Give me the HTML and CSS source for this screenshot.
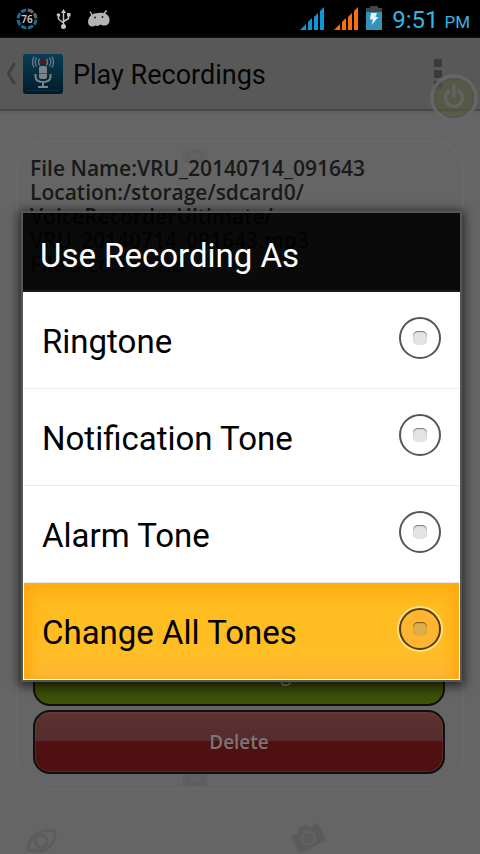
FILE: index.html
```html
<!DOCTYPE html>
<html lang="en">
<head>
<meta charset="utf-8">
<meta name="viewport" content="width=device-width, initial-scale=1">
<title>Play Recordings</title>
<link rel="stylesheet" href="styles.css">
</head>
<body>
<div class="screen">
  <div class="status">
    <svg class="status-left" width="112" height="38" viewBox="0 0 112 38" aria-hidden="true">
      <circle cx="27" cy="19" r="9" fill="none" stroke="#1d6c8d" stroke-width="3" stroke-dasharray="5.6 1.47" transform="rotate(3 27 19)"/>
      <path d="M28 10A9 9 0 0 1 33 12.500M34.500 14A9 9 0 0 1 36 18" fill="none" stroke="#666" stroke-width="3"/>
      <text x="27" y="23" class="percent">76</text>
      <g fill="none" stroke="#c4c4c4" stroke-width="1.500"><path d="M63.500 12V26M58.500 16V19L63.500 23M68.500 15V18.500L63.500 21.500"/></g>
      <g fill="#c4c4c4"><path d="M61 13L63.500 9L66 13Z"/><circle cx="63.500" cy="26.500" r="2.500"/><circle cx="58.500" cy="15" r="1.800"/><path d="M67 13h3.500v3.500H67z"/></g>
      <path d="M92 15L90 11.500M104 14L106.500 10.500" stroke="#b4b4b4" stroke-width="1.500"/>
      <path d="M88 22C88.500 16 92.500 13 98.500 13C104.500 12 109 15 109.500 19C110 23 108 25.500 104.500 25.500C102.500 25.500 101 25 100 24.500C98.500 26.500 96.500 26 95.500 25.500C93 27.500 88 27 88 22Z" fill="#b4b4b4"/>
      <circle cx="95" cy="17.500" r="1" fill="#222"/><circle cx="102.500" cy="17" r="1" fill="#222"/>
    </svg>
    <div class="status-right">
      <svg width="82" height="38" viewBox="0 0 82 38" aria-hidden="true">
        <g fill="#0898dc"><path d="M0 30L6 24V30ZM8 22L12 18V30H8ZM14 17L18 13V30H14ZM20 11L24 7V30H20Z"/></g>
        <g fill="#ff6d0c" transform="translate(34)"><path d="M0 30L6 24V30ZM8 22L12 18V30H8ZM14 17L18 13V30H14ZM20 11L24 7V30H20Z"/></g>
        <path d="M66 12V8H70V6H78V8H82V12Z" fill="#454545"/>
        <path d="M66 12H82V30H66Z" fill="#3393b9"/>
        <path d="M71 13H77L75.500 17H78.500L71.500 25L73 19.500H70Z" fill="#e4f3f8"/>
      </svg>
      <span class="clock">9:51 <small>PM</small></span>
    </div>
  </div>

  <header class="appbar">
    <a class="up" href="#" aria-label="Back">
      <svg width="11" height="24" viewBox="0 0 11 24"><path d="M9.500 1L3.500 11.500L9.500 22" fill="none" stroke="#414141" stroke-width="3"/></svg>
      <svg width="40" height="40" viewBox="0 0 40 40">
        <defs><linearGradient id="tile" x2="0" y2="1"><stop stop-color="#063e55"/><stop offset="1" stop-color="#031a29"/></linearGradient></defs>
        <rect width="40" height="40" rx="3" fill="url(#tile)"/>
        <path d="M4 36.500H36" stroke="#073448"/>
        <circle cx="20" cy="8" r="2.500" fill="#770a0a"/>
        <g fill="none" stroke="#687984" stroke-width="1.300"><path d="M16.500 4.500Q14.500 8 16.500 11.500M13.500 3.500Q11 8 13.500 12.500M11 2.500Q8 8 11 13.500M23.500 4.500Q25.500 8 23.500 11.500M26.500 3.500Q29 8 26.500 12.500M29 2.500Q32 8 29 13.500"/></g>
        <rect x="16" y="12" width="8" height="13" rx="2" fill="#7d858a"/><path d="M16 19.500H24" stroke="#46545c"/>
        <path d="M12.500 20V23Q13 28 20 28Q27 28 27.500 23V20M20 28V33M15 33H25" fill="none" stroke="#7d858a" stroke-width="2"/>
      </svg>
    </a>
    <h1>Play Recordings</h1>
    <button class="more" aria-label="More options"><i></i><i></i><i></i></button>
    <button class="power" aria-label="Power">
      <svg width="48" height="48" viewBox="0 0 48 48"><circle cx="24" cy="24" r="20.500" fill="#555940" fill-opacity=".75"/><circle cx="24" cy="24" r="22" fill="none" stroke="#686868" stroke-width="4"/><circle cx="24" cy="24" r="19.500" fill="none" stroke="#4d5044"/><g fill="none" stroke="#66675f" stroke-width="3.500" stroke-linecap="round"><path d="M19 17A8.500 8.500 0 1 0 29 17M24 12V22"/></g></svg>
    </button>
  </header>

  <main class="page">
    <svg class="doodle film top" width="24" height="16" viewBox="0 0 24 16"><use href="#film"/></svg>
    <svg class="doodle film bottom" width="24" height="14" viewBox="0 0 24 14"><g id="film"><path d="M0 0H24V14H0Z" fill="#585858" opacity=".65"/><path d="M2 1V14M22 1V14" stroke="#626262" stroke-width="2" stroke-dasharray="2 1.500"/><path d="M7 2L12 5L17 2V12L12 9L7 12Z" fill="#626262"/></g></svg>
    <svg class="doodle planet" width="32" height="24" viewBox="0 0 32 24"><g fill="none" stroke="#595959" stroke-width="3"><circle cx="15" cy="12" r="6"/><path d="M7 21C3 23 1 20 3 15C8 4 18 0 28 2C31 5 27 16 20 20Q14 24 7 21"/></g></svg>
    <svg class="doodle camera" width="36" height="32" viewBox="0 0 36 32"><g transform="rotate(-27 18 16)"><path d="M3 8H11L13 4H22L24 8H33V27H3Z" fill="#585858"/><circle cx="18" cy="17" r="6.500" fill="#595959" stroke="#636363" stroke-width="2"/></g></svg>
    <section class="card">
      <p class="info">File Name:VRU_20140714_091643<br>Location:/storage/sdcard0/<br>VoiceRecorderUltimate/<br>VRU_20140714_091643.mp3<br>File Size:157 KB</p>
      <div class="actions">
        <button class="action green">Use Recording As</button>
        <button class="action red">Delete</button>
      </div>
    </section>
  </main>

  <div class="overlay">
    <form class="dialog" role="dialog" aria-labelledby="dialog-title">
      <h2 id="dialog-title">Use Recording As</h2>
      <label class="option"><span>Ringtone</span><input type="radio" name="tone"></label>
      <label class="option"><span>Notification Tone</span><input type="radio" name="tone"></label>
      <label class="option"><span>Alarm Tone</span><input type="radio" name="tone"></label>
      <label class="option pressed"><span>Change All Tones</span><input type="radio" name="tone"></label>
    </form>
  </div>
</div>
</body>
</html>
```
FILE: styles.css
```css
* { box-sizing: border-box; }
body { margin: 0; background: #656565; font-family: Roboto, "Liberation Sans", sans-serif; }
h1, h2, p { margin: 0; font-weight: 400; }
button { border: 0; padding: 0; background: none; font: inherit; }
svg { display: block; }
.screen { position: relative; display: flex; flex-direction: column; min-height: 100vh; overflow: hidden; }

.status { display: flex; justify-content: space-between; height: 38px; padding-right: 10px; background: #000; }
.status-right { display: flex; align-items: center; gap: 10px; }
.percent { fill: #ccc; font: 600 10px "Noto Sans", sans-serif; text-anchor: middle; }
.clock { padding-top: 4px; color: #33b5e5; font-size: 24px; line-height: 38px; white-space: nowrap; }
.clock small { font-size: 17px; }

.appbar { position: relative; display: flex; align-items: center; height: 73px; padding: 0 33px 0 5px; background: #585858; border-bottom: 2px solid #484848; box-shadow: 0 1px 3px #5a5a5a; }
.up { display: flex; align-items: center; gap: 7px; }
.appbar h1 { flex: 1; padding-top: 2px; margin-left: 10px; font-size: 27px; color: #050505; }
.more { display: grid; gap: 3px; width: 18px; justify-content: center; }
.more i { width: 8px; height: 8px; background: #3b3b3b; }
.power { position: absolute; right: 2px; top: 36px; z-index: 1; opacity: .85; }

.page { position: relative; flex: 1; display: flex; flex-direction: column; padding: 29px 16px 64px; }
.card { position: relative; flex: 1; display: flex; flex-direction: column; justify-content: space-between; padding: 14px 16px; border: 2px solid #686868; border-radius: 30px; }
.info { margin-left: -4px; font: 600 21px/24px "Open Sans", sans-serif; color: #191919; overflow-wrap: anywhere; }
.actions { display: grid; gap: 4px; margin: 0 1px 0 -1px; }
.action { height: 64px; border: 2px solid #101010; border-radius: 17px; color: #777; font: 600 19px "Open Sans", sans-serif; }
.green { background: linear-gradient(#52603a 0 48%, #304006 50%, #405508); }
.red { background: linear-gradient(#5d3233, #552b2d 48%, #501011 49%); box-shadow: inset 0 0 2px #7b5556; }
.doodle { position: absolute; opacity: .7; }
.film.top { left: 183px; top: 38px; opacity: .5; }
.film.bottom { left: 183px; bottom: 68px; }
.planet { left: 26px; bottom: 1px; }
.camera { left: 290px; bottom: 1px; }

.overlay { position: absolute; inset: 38px 0 0; display: grid; align-items: center; padding: 0 18px 0 21px; }
.dialog { border: 2px solid #565656; box-shadow: 0 2px 10px 2px rgba(0, 0, 0, .65); }
.dialog h2 { height: 79px; padding-left: 17px; background: rgba(0, 0, 0, .9); border-bottom: 2px solid #1a1819; color: #fff; font-size: 33px; line-height: 86px; }
.option { display: flex; align-items: center; justify-content: space-between; height: 97px; padding: 0 18px; border: solid #fff; border-width: 0 1px; background: linear-gradient(#e9e9e9, #e9e9e9) bottom / 100% 1px no-repeat #fff; color: #000; font-size: 33px; line-height: 40px; }
.option span { padding-top: 4px; }
.option input { appearance: none; width: 42px; height: 42px; margin: 0 0 4px; border: 2px solid #565656; border-radius: 50%; display: grid; place-items: center; }
.option input::before { content: ""; width: 14px; height: 14px; border-radius: 5px; background: #e3e3e3; box-shadow: inset 0 1px 1px #777; }
.pressed { border-bottom: 1px solid #fff; background: linear-gradient(#ffb014, #ffbc20 25%, #ffbe25 70%, #ffb534); box-shadow: inset 14px 0 14px -8px #ffa70f, inset -14px 0 14px -8px #ffa70f; }
.pressed input { border-color: #543e0d; background: #ffb52f; box-shadow: 0 0 0 2px #ffdf83; }
.pressed input::before { background: #deae49; box-shadow: inset 0 1px 1px #775815; }
```
